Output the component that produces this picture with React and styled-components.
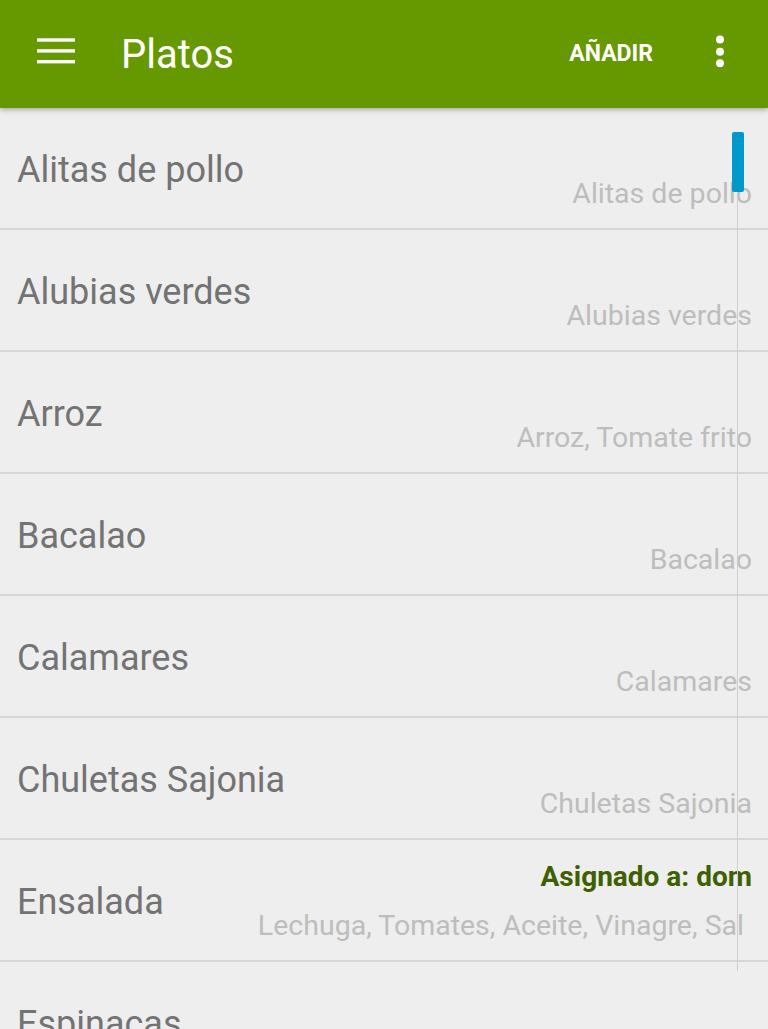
import React from "react";
import styled, { createGlobalStyle } from "styled-components";

const Global = createGlobalStyle`
  html, body { margin: 0; padding: 0; background: #eeeeee; }
  body { font-family: Roboto, "Noto Sans", sans-serif; overflow: hidden; }
  #root { width: 768px; height: 1029px; overflow: hidden; }
`;

const Screen = styled.div`
  position: relative;
  width: 768px;
  height: 1029px;
  background: #eeeeee;
  overflow: hidden;
`;

const Toolbar = styled.header`
  position: relative;
  z-index: 2;
  height: 108px;
  background: #669900;
  display: flex;
  align-items: center;
  box-shadow: 0 2px 5px rgba(0, 0, 0, 0.28);
`;

const MenuButton = styled.div`
  width: 38px;
  height: 26px;
  margin-left: 37px;
  margin-bottom: 6px;
  display: flex;
`;

const Title = styled.h1`
  margin: 0 0 0 46px;
  flex: 1;
  font-family: Roboto, sans-serif;
  font-weight: 400;
  font-size: 40px;
  color: #ffffff;
  line-height: 1;
  padding-top: 2px;
`;

const Action = styled.span`
  font-family: Roboto, sans-serif;
  font-weight: 700;
  font-size: 23px;
  line-height: 1;
  color: #ffffff;
  margin-right: 62px;
  margin-bottom: 2px;
`;

const Overflow = styled.div`
  width: 10px;
  height: 34px;
  margin-right: 43px;
  margin-bottom: 4px;
  display: flex;
`;

const List = styled.div`
  display: flex;
  flex-direction: column;
`;

const Row = styled.div`
  height: 120px;
  border-bottom: 2px solid #d6d6d6;
  display: grid;
  grid-template-columns: 1fr;
  grid-template-rows: 1fr;
  padding: 0 16px 0 17px;
`;

const ItemTitle = styled.div`
  grid-area: 1 / 1;
  align-self: start;
  margin-top: 41px;
  font-size: 36px;
  line-height: 42px;
  color: #737373;
  white-space: nowrap;
`;

const ItemSub = styled.div`
  grid-area: 1 / 1;
  align-self: start;
  justify-self: end;
  margin-top: 70px;
  margin-right: ${(p) => p.$inset || 0}px;
  font-size: 28.5px;
  line-height: 32px;
  color: #bdbdbd;
  white-space: nowrap;
`;

const Tag = styled.div`
  grid-area: 1 / 1;
  align-self: start;
  justify-self: end;
  margin-top: 21px;
  font-size: 28px;
  line-height: 32px;
  font-weight: 700;
  color: #3f6000;
  white-space: nowrap;
`;

const Track = styled.div`
  position: absolute;
  left: 737px;
  top: 132px;
  width: 1px;
  height: 839px;
  background: #cfcfcf;
  z-index: 1;
`;

const Thumb = styled.div`
  position: absolute;
  left: 732px;
  top: 132px;
  width: 12px;
  height: 60px;
  border-radius: 2px;
  background: #0099cc;
  z-index: 1;
`;

const items = [
  { title: "Alitas de pollo", sub: "Alitas de pollo" },
  { title: "Alubias verdes", sub: "Alubias verdes" },
  { title: "Arroz", sub: "Arroz, Tomate frito" },
  { title: "Bacalao", sub: "Bacalao" },
  { title: "Calamares", sub: "Calamares" },
  { title: "Chuletas Sajonia", sub: "Chuletas Sajonia" },
  {
    title: "Ensalada",
    sub: "Lechuga, Tomates, Aceite, Vinagre, Sal",
    tag: "Asignado a: dom",
    inset: 8,
  },
  { title: "Espinacas", sub: "Espinacas" },
];

export default function App() {
  return (
    <>
      <Global />
      <Screen>
        <Toolbar>
          <MenuButton>
            <svg width="38" height="26" viewBox="0 0 38 26">
              <rect x="0" y="0.3" width="38" height="3.4" fill="#fff" />
              <rect x="0" y="11.2" width="38" height="3.4" fill="#fff" />
              <rect x="0" y="22" width="38" height="3.4" fill="#fff" />
            </svg>
          </MenuButton>
          <Title>Platos</Title>
          <Action>AÑADIR</Action>
          <Overflow>
            <svg width="10" height="34" viewBox="0 0 10 34">
              <circle cx="5" cy="4.5" r="4" fill="#fff" />
              <circle cx="5" cy="16.7" r="4" fill="#fff" />
              <circle cx="5" cy="28.3" r="4" fill="#fff" />
            </svg>
          </Overflow>
        </Toolbar>
        <List>
          {items.map((it) => (
            <Row key={it.title}>
              {it.tag && <Tag>{it.tag}</Tag>}
              <ItemTitle>{it.title}</ItemTitle>
              <ItemSub $inset={it.inset}>{it.sub}</ItemSub>
            </Row>
          ))}
        </List>
        <Track />
        <Thumb />
      </Screen>
    </>
  );
}
